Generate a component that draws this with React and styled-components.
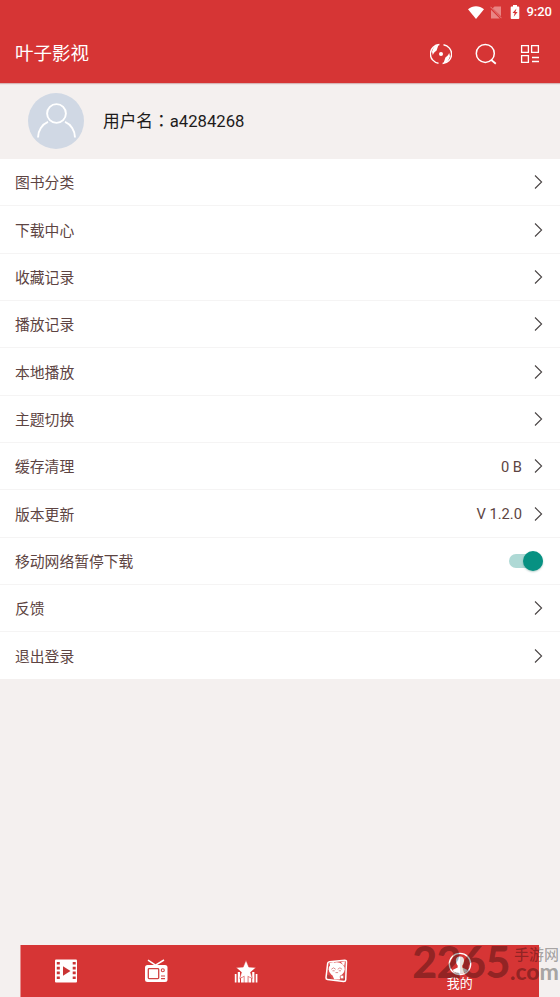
import React from 'react'
import styled, { createGlobalStyle } from 'styled-components'

const GlobalStyle = createGlobalStyle`
*{
  box-sizing:border-box;
}
body{
  margin:0;
  background:#f4f0ef;
  font-family: Roboto, "Noto Sans CJK SC", sans-serif;
}
p{
  margin:0;
}
svg{
  display:block;
}
`

const items = [
  { label: '图书分类' },
  { label: '下载中心' },
  { label: '收藏记录' },
  { label: '播放记录' },
  { label: '本地播放' },
  { label: '主题切换' },
  { label: '缓存清理', value: '0 B' },
  { label: '版本更新', value: 'V 1.2.0' },
  { label: '移动网络暂停下载', toggle: true },
  { label: '反馈' },
  { label: '退出登录' },
]

const WifiIcon = () => (
  <svg width="16" height="13" viewBox="0 0 16 13">
    <path d="M0 3.2C4.6-.7 11.4-.7 16 3.2L8 13z" fill="#fff" />
  </svg>
)

const NoSimIcon = () => (
  <svg width="12" height="13" viewBox="0 0 12 13">
    <path d="M4.5.5H11v9.700L2.700 2.300zM1 3.700l8.800 8.800H1z" fill="#e98584" />
    <path d="M.5.8l11 11.400" stroke="#e98584" strokeWidth="1" />
  </svg>
)

const BatteryIcon = () => (
  <svg width="10" height="14" viewBox="0 0 10 14">
    <path d="M3 0h4v1.500h1.400q.9 0 .9.9v10.700q0 .9-.9.9H1.600q-.9 0-.9-.9V2.400q0-.9.9-.9H3z" fill="#fff" />
    <path d="M6.500 3.600L2.500 8h2.200l-1 3.700L7.600 7H5.400z" fill="#d63535" />
  </svg>
)

const DiscIcon = () => (
  <svg width="22" height="22" viewBox="0 0 22 22" fill="none" stroke="#fff" strokeWidth="1.4">
    <path d="M9.400 1.500A9.400 9.400 0 0 0 8.500 20.200M12.600 20.500A9.400 9.400 0 0 0 13.500 1.800" />
    <path d="M8.600 1.600C5 2.600 3 5 2 8.800l.8 3.200C4 9 5.500 8.500 6.600 7.400zM13.400 20.400c3.600-1 5.600-3.400 6.600-7.200l-.8-3.200c-1.200 3-2.700 3.500-3.800 4.600z" fill="#fff" stroke="none" />
    <circle cx="11" cy="11" r="2" fill="#fff" stroke="none" />
  </svg>
)

const SearchIcon = () => (
  <svg width="22" height="22" viewBox="0 0 22 22" fill="none" stroke="#fff" strokeWidth="1.5">
    <circle cx="10.3" cy="10.4" r="9" />
    <path d="M16 16.800l4.800 4" strokeWidth="1.800" />
  </svg>
)

const GridIcon = () => (
  <svg width="20" height="20" viewBox="0 0 20 20" fill="none" stroke="#fff" strokeWidth="1.300">
    <path d="M1.600 1.600h6.800v6.800H1.600zM11.600 1.600h6.800v6.800h-6.800zM1.600 11.600h6.800v6.800H1.600zM12 13.500h7M12 17.500h7" />
  </svg>
)

const PersonIcon = () => (
  <svg width="56" height="56" viewBox="0 0 56 56" fill="none" stroke="#fff" strokeWidth="1.9">
    <circle cx="28.5" cy="20.5" r="9.400" />
    <path d="M10 44.500c0-7 4.200-13.200 10-15.600M37 28.900c5.800 2.400 10 8.600 10 15.600" />
  </svg>
)

const ArrowIcon = () => (
  <svg width="9" height="16" viewBox="0 0 9 16" fill="none" stroke="#4a4545" strokeWidth="1.1">
    <path d="M1 1.500l6.600 6.500L1 14.500" />
  </svg>
)

const FilmIcon = () => (
  <svg width="24" height="24" viewBox="0 0 24 24">
    <path d="M2 .5q-1 0-1 1v21q0 1 1 1h20q1 0 1-1v-21q0-1-1-1z" fill="#fff" />
    <path d="M2.800 3h3v2.600h-3zM2.800 7.800h3v2.600h-3zM2.800 12.600h3v2.600h-3zM2.800 17.400h3V20h-3zM18.700 3h3v2.600h-3zM18.700 7.800h3v2.600h-3zM18.700 12.600h3v2.600h-3zM18.700 17.400h3V20h-3z" fill="#c93535" />
    <path d="M9 7.300v9.400l7.500-4.700z" fill="#c93535" />
  </svg>
)

const TvIcon = () => (
  <svg width="24" height="24" viewBox="0 0 24 24" fill="none" stroke="#fff">
    <path d="M4 1.200l7.500 5L20 1" strokeWidth="1.500" />
    <rect x="1" y="6" width="22.500" height="17" rx="2.500" fill="#fff" stroke="none" />
    <rect x="4.300" y="9.600" width="10.400" height="10" rx=".8" stroke="#d14343" strokeWidth="1.300" />
    <circle cx="18.800" cy="11.200" r="1.500" stroke="#d14343" strokeWidth="1.100" />
    <path d="M17 17h4M17 19.700h4" stroke="#d14343" strokeWidth="1.200" />
  </svg>
)

const StarIcon = () => (
  <svg width="24" height="24" viewBox="0 0 24 24" fill="#fff">
    <path d="M.8 15h1.700v8.500H.8zM21.700 15h1.700v8.500h-1.700zM3.800 13H6v10.500H3.800zM18.200 13h2.200v10.500h-2.200z" />
    <path d="M7 19l2.800-1.600v6.100H7zM14.400 17.400l2.800 1.600v4.500h-2.800z" />
    <path d="M12 1.300l2.800 6.800 7.200.5-5.500 4.700 1.800 6.200-6.300-3.100-6.300 3.100 1.800-6.200L2 8.600l7.200-.5z" stroke="#d63535" strokeWidth=".5" />
    <path d="M10.400 15.500h3.300v8h-3.300z" />
  </svg>
)

const PandaIcon = () => (
  <svg width="24" height="24" viewBox="0 0 24 24">
    <path d="M5.500 2.700L20.700 1.200q1.800-.1 1.800 1.800l-.8 17.800q-.2 1.900-2 1.800L3.500 20.500q-1.700-.3-1.500-2L3.700 4.200Q3.900 2.900 5.500 2.700z" fill="#dd4848" stroke="#fff" strokeWidth="1.500" strokeLinejoin="round" />
    <ellipse cx="12.700" cy="10.300" rx="8" ry="7" fill="#fff" />
    <path d="M5.500 4l5-1.200L6.500 8zM17 3l4-.8-.8 5z" fill="#fff" />
    <path d="M7.800 15l2.500 5.500h5.400l2.300-5.500z" fill="#fff" />
    <path d="M3.300 16l2.500.5 1.600 3.200-4-.6zM18.700 20.500l2-2-.1 2.800z" fill="#a94040" />
    <path d="M7.300 10.300q2.200-3 4.400 0M13.700 10.300q2.200-3 4.400 0M8.500 11.800h2.200M14.800 11.800H17M11.500 13.600h2.600" fill="none" stroke="#d98080" strokeWidth=".9" />
    <circle cx="18" cy="18" r="1.900" fill="#fff" stroke="#c94444" strokeWidth=".7" />
  </svg>
)

const MineIcon = () => (
  <svg width="24" height="24" viewBox="0 0 24 24">
    <circle cx="12" cy="12" r="10.700" fill="#d63535" stroke="#fff" strokeWidth="1.300" />
    <path d="M12 4.500c-3.300 0-4.400 2.200-4 5.200.2 1.900 1 3 1.700 3.900v2L4.600 18A10 10 0 0 0 12 22z" fill="#fff" />
    <path d="M12 4.500c3.300 0 4.400 2.200 4 5.200-.2 1.900-1 3-1.700 3.900v2l5.100 2.400A10 10 0 0 1 12 22z" fill="#e6e0df" />
  </svg>
)

const App = () => {
  return (
    <Wrap>
      <GlobalStyle />
      <Header>
        <Status>
          <WifiIcon />
          <NoSimIcon />
          <BatteryIcon />
          <Time>9:20</Time>
        </Status>
        <Toolbar>
          <Title>叶子影视</Title>
          <Actions>
            <DiscIcon />
            <SearchIcon />
            <GridIcon />
          </Actions>
        </Toolbar>
      </Header>
      <Profile>
        <Avatar><PersonIcon /></Avatar>
        <UserName>用户名<Colon>：</Colon>a4284268</UserName>
      </Profile>
      <List>
        {items.map((item) => (
          <Row key={item.label}>
            <Label>{item.label}</Label>
            {item.value && <Value>{item.value}</Value>}
            {item.toggle ? <Switch><Knob /></Switch> : <ArrowIcon />}
          </Row>
        ))}
      </List>
      <Footer>
        <Tab><FilmIcon /></Tab>
        <Tab><TvIcon /></Tab>
        <Tab><StarIcon /></Tab>
        <Tab><PandaIcon /></Tab>
        <Tab $active>
          <MineIcon />
          <p>我的</p>
        </Tab>
      </Footer>
      <Watermark>
        <Digits>2265</Digits>
        <Site>
          <SiteName>手游网</SiteName>
          <Domain>.com</Domain>
        </Site>
      </Watermark>
    </Wrap>
  )
}

export default App

const Wrap = styled.div`
position:relative;
display:flex;
flex-direction:column;
width:560px;
height:997px;
overflow:hidden;
background:#f4f0ef;
`
const Header = styled.header`
height:83px;
flex:none;
background:#d63535;
color:#fff;
box-shadow:0 1px 1px rgba(150, 50, 50, 0.3);
`
const Status = styled.div`
display:flex;
align-items:center;
justify-content:flex-end;
height:24px;
padding-right:8px;
svg:nth-child(2){
  margin:0 8px 0 6px;
}
`
const Time = styled.p`
margin-left:6px;
font-size:13px;
font-weight:500;
line-height:24px;
`
const Toolbar = styled.div`
display:flex;
align-items:center;
justify-content:space-between;
height:59px;
padding:0 20px 0 15px;
`
const Title = styled.h1`
margin:0;
font-size:18.5px;
font-weight:400;
line-height:28px;
`
const Actions = styled.div`
display:flex;
align-items:center;
gap:23px;
`
const Profile = styled.div`
display:flex;
align-items:center;
gap:19px;
flex:none;
height:76px;
padding-left:28px;
`
const Avatar = styled.div`
width:56px;
height:56px;
border-radius:50%;
background:#d0d8e4;
`
const UserName = styled.p`
font-size:16.7px;
line-height:24px;
color:#1d1b1b;
`
const Colon = styled.span`
font-family:"Noto Sans CJK TC", sans-serif;
`
const List = styled.div`
flex:none;
background:#fff;
`
const Row = styled.div`
display:flex;
align-items:center;
height:47.35px;
padding:0 17px 0 15px;
border-bottom:1px solid #f5f4f4;
&:last-child{
  height:46.5px;
  border-bottom:none;
}
`
const Label = styled.p`
flex:1;
padding-top:2px;
font-size:14.8px;
line-height:22px;
color:#5d4442;
`
const Value = styled.p`
padding-top:1px;
margin-right:12px;
font-size:14.7px;
line-height:22px;
color:#5d4442;
`
const Switch = styled.div`
display:flex;
align-items:center;
justify-content:flex-end;
width:34px;
height:14px;
border-radius:7px;
background:#aed9d5;
`
const Knob = styled.div`
width:20px;
height:20px;
flex:none;
border-radius:50%;
background:#079182;
box-shadow:0 1px 2px rgba(0, 90, 80, 0.3);
`
const Footer = styled.footer`
display:flex;
height:52px;
margin:auto 21px 0 20px;
background:#d63535;
border-left:1px solid #e58e8d;
`
const Tab = styled.div`
display:flex;
flex-direction:column;
align-items:center;
justify-content:${(p) => (p.$active ? 'flex-start' : 'center')};
flex:${(p) => (p.$active ? '1' : '0 0 90px')};
padding-top:${(p) => (p.$active ? '7px' : '0')};
color:#fff;
&:first-child{
  margin-left:-0.5px;
}
p{
  font-size:13px;
  line-height:15px;
}
`
/* sits on top of the tab bar */
const Watermark = styled.div`
position:absolute;
right:1px;
bottom:17px;
display:flex;
align-items:flex-end;
color:rgba(0, 0, 0, 0.32);
`
const Digits = styled.p`
font-family:Lato, sans-serif;
font-size:43px;
font-weight:900;
line-height:36px;
letter-spacing:-0.5px;
`
const Site = styled.div`
display:flex;
flex-direction:column;
align-items:flex-end;
`
const SiteName = styled.p`
font-size:15px;
line-height:15px;
font-weight:500;
`
const Domain = styled.p`
font-family:Lato, sans-serif;
font-size:23px;
font-weight:900;
line-height:17px;
`
